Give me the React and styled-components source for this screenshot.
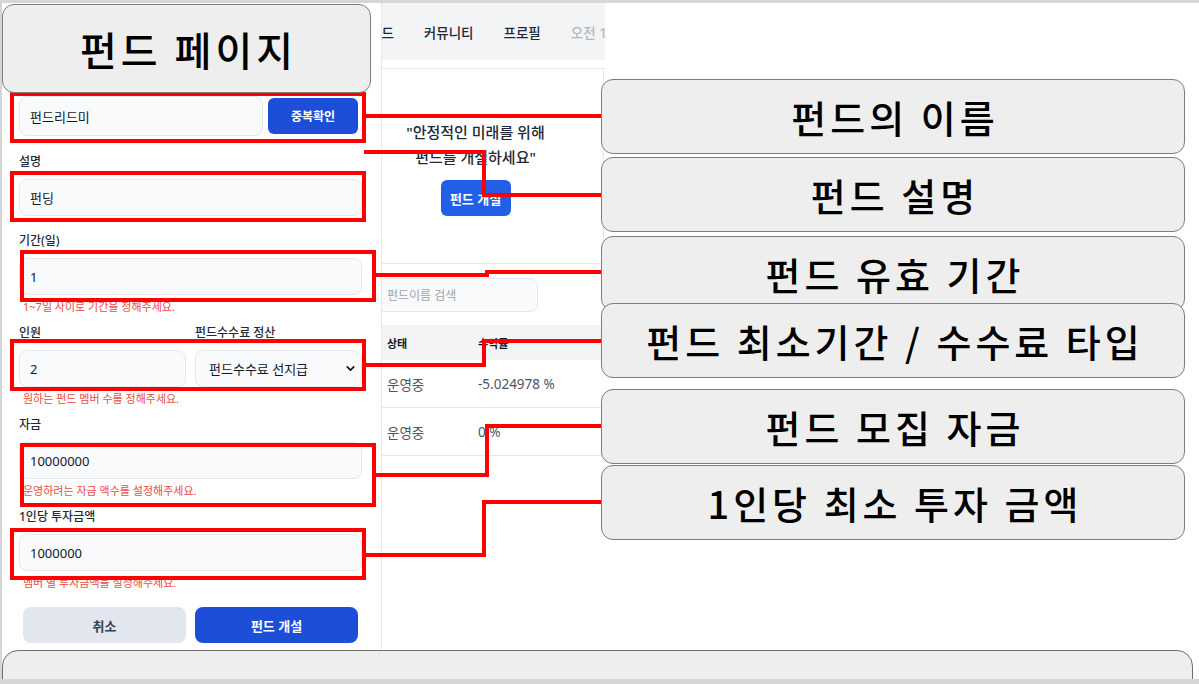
import React from 'react'
import styled, { createGlobalStyle } from 'styled-components'
import { ChevronDown } from 'lucide-react'

const GlobalStyle = createGlobalStyle`
  html, body {
    margin: 0;
    padding: 0;
    background: #d6d6d6;
  }

  body {
    font-family: "Noto Sans", "Noto Sans CJK KR", sans-serif;
  }

  * {
    box-sizing: border-box;
  }
`

const Slide = styled.div`
  align-items: flex-start;
  background: white;
  display: flex;
  height: 676px;
  margin: 3px 0 0 2px;
  overflow: hidden;
  position: relative;
  width: 1197px;
`

const Screenshot = styled.div`
  display: flex;
  flex: none;
  height: 647px;
  width: 603px;
`

// the drawer's header sits under the "펀드 페이지" callout, so it starts at the name row
const FormPanel = styled.div`
  background: white;
  border-right: 1px solid #e5e7eb;
  display: flex;
  flex: none;
  flex-direction: column;
  gap: 11px;
  padding: 93px 19px 0 17px;
  width: 380px;
`

const Field = styled.div`
  display: flex;
  flex-direction: column;
  padding-bottom: ${p => p.$pad || 0}px;
`

const Label = styled.label`
  color: #1f2937;
  font-size: 12px;
  font-weight: 500;
  line-height: 16px;
  margin-bottom: 9px;
  white-space: nowrap;
`

const Input = styled.input`
  background: #f9fafb;
  border: 1px solid #e5e7eb;
  border-radius: 8px;
  color: #111827;
  font-family: inherit;
  font-size: 13px;
  height: ${p => p.$h || 37}px;
  min-width: 0;
  outline: none;
  padding: 0 10px;
  width: 100%;
`

const InlineRow = styled.div`
  align-items: center;
  display: flex;
  gap: 5px;
  padding-right: 4px;
`

const CheckButton = styled.button`
  background: #1d4ed8;
  border: none;
  border-radius: 6px;
  color: white;
  flex: none;
  font-family: inherit;
  font-size: 12px;
  font-weight: 700;
  height: 36px;
  width: 90px;
`

const Hint = styled.div`
  color: #ea4b43;
  font-size: 11px;
  line-height: 14px;
  margin-top: 5px;
  padding-left: 4px;
  white-space: nowrap;
`

const TwoCols = styled.div`
  display: grid;
  gap: 9px;
  grid-template-columns: 1fr 1fr;
`

const Col = styled.div`
  display: flex;
  flex-direction: column;
`

const SelectBox = styled.div`
  align-items: center;
  background: #f9fafb;
  border: 1px solid #e5e7eb;
  border-radius: 8px;
  color: #111827;
  display: flex;
  font-size: 13px;
  height: 37px;
  justify-content: space-between;
  padding: 0 4px 0 13px;
`

const Actions = styled.div`
  display: grid;
  gap: 9px;
  grid-template-columns: 1fr 1fr;
  margin-top: 6px;
  padding: 0 4px;
`

const ActionButton = styled.button`
  background: ${p => p.$primary ? '#1d4ed8' : '#e2e6ee'};
  border: none;
  border-radius: 8px;
  color: ${p => p.$primary ? 'white' : '#374151'};
  font-family: inherit;
  font-size: 13px;
  font-weight: 700;
  height: 36px;
`

const PageView = styled.div`
  background: white;
  display: flex;
  flex: 1;
  flex-direction: column;
  min-width: 0;
  overflow: hidden;
`

const TopNav = styled.nav`
  align-items: center;
  background: #f3f4f6;
  display: flex;
  flex: none;
  gap: 30px;
  height: 57px;
  margin-left: -13px;
  white-space: nowrap;
`

const NavItem = styled.span`
  color: ${p => p.$muted ? '#b4b8bf' : '#1f2937'};
  font-size: 13.5px;
  font-weight: 500;
`

const HeroCard = styled.div`
  align-items: center;
  border: 1px solid #e5e7eb;
  display: flex;
  flex: none;
  flex-direction: column;
  height: 196px;
  margin: 8px 0 0 -35px;
  padding-top: 51px;
  width: 257px;
`

const Quote = styled.p`
  color: #1f2937;
  font-size: 15px;
  font-weight: 500;
  line-height: 25px;
  margin: 0;
  text-align: center;
  white-space: nowrap;
`

const HeroButton = styled.button`
  background: #2160e6;
  border: none;
  border-radius: 6px;
  color: white;
  font-family: inherit;
  font-size: 13px;
  font-weight: 700;
  height: 36px;
  margin-top: 10px;
  width: 70px;
`

const Search = styled.div`
  align-items: center;
  background: #f9fafb;
  border: 1px solid #e5e7eb;
  border-radius: 8px;
  color: #9ca3af;
  display: flex;
  flex: none;
  font-size: 12px;
  height: 34px;
  margin: 14px 0 0 -10px;
  padding-left: 14px;
  width: 166px;
`

const Table = styled.div`
  display: flex;
  flex-direction: column;
  margin-top: 13px;
`

const TableRow = styled.div`
  align-items: center;
  background: ${p => p.$head ? '#f3f4f6' : 'white'};
  border-bottom: ${p => p.$head ? 'none' : '1px solid #e5e7eb'};
  color: ${p => p.$head ? '#111827' : '#4b5563'};
  display: grid;
  font-size: ${p => p.$head ? 11 : 13.5}px;
  font-weight: ${p => p.$head ? 700 : 400};
  grid-template-columns: 91px 1fr;
  height: ${p => p.$head ? 35 : 48}px;
  padding-left: 5px;
  white-space: nowrap;
`

const CalloutColumn = styled.div`
  display: flex;
  flex: none;
  flex-direction: column;
  margin-left: -4px;
  padding-top: 76px;
  width: 584px;
`

const Callout = styled.div`
  align-items: center;
  background: #eeeeee;
  border: 1.5px solid #7d7d7d;
  border-radius: 12px;
  color: #000;
  display: flex;
  font-family: "Noto Sans CJK KR", sans-serif;
  font-size: 38px;
  font-weight: 500;
  height: 75px;
  justify-content: center;
  letter-spacing: 4px;
  margin-top: ${p => p.$offset || 0}px;
  padding-left: 4px;
  position: relative;
  white-space: nowrap;
`

const TitleCallout = styled(Callout)`
  font-size: 40px;
  height: 89px;
  left: 0;
  margin: 0;
  position: absolute;
  top: 1px;
  width: 369px;
`

const FooterBar = styled.div`
  background: #eeeeee;
  border: 1.5px solid #6f6f6f;
  border-radius: 16px 16px 0 0;
  height: 50px;
  left: 0;
  position: absolute;
  top: 647px;
  width: 1191px;
`

const Markup = styled.svg`
  left: 0;
  pointer-events: none;
  position: absolute;
  top: 0;
`

const rects = [
  [12, 94, 352, 47],
  [12, 173, 352, 47],
  [22, 252, 352, 48],
  [12, 341, 352, 48],
  [22, 445, 352, 60],
  [12, 530, 352, 48],
]

const leaders = [
  '364,116 601,116',
  '364,152 484,152 484,195 601,195',
  '374,275 487,275 487,272 601,272',
  '364,365 484,365 484,341 601,341',
  '374,475 487,475 487,426 601,426',
  '364,555 484,555 484,502 601,502',
]

const callouts = [
  { text: '펀드의 이름', offset: 0 },
  { text: '펀드 설명', offset: 3 },
  { text: '펀드 유효 기간', offset: 4 },
  { text: '펀드 최소기간 / 수수료 타입', offset: -8 },
  { text: '펀드 모집 자금', offset: 11 },
  { text: '1인당 최소 투자 금액', offset: 1 },
]

const App = () => (
  <>
    <GlobalStyle />
    <Slide>
      <Screenshot>
        <FormPanel>
          <Field $pad={7}>
            <InlineRow>
              <Input $h={40} readOnly value="펀드리드미" />
              <CheckButton>중복확인</CheckButton>
            </InlineRow>
          </Field>
          <Field $pad={6}>
            <Label>설명</Label>
            <Input readOnly value="펀딩" />
          </Field>
          <Field>
            <Label>기간(일)</Label>
            <Input readOnly value="1" />
            <Hint>1~7일 사이로 기간을 정해주세요.</Hint>
          </Field>
          <Field>
            <TwoCols>
              <Col>
                <Label>인원</Label>
                <Input readOnly value="2" />
              </Col>
              <Col>
                <Label>펀드수수료 정산</Label>
                <SelectBox>
                  펀드수수료 선지급
                  <ChevronDown size={13} strokeWidth={3} color="#111" />
                </SelectBox>
              </Col>
            </TwoCols>
            <Hint>원하는 펀드 멤버 수를 정해주세요.</Hint>
          </Field>
          <Field>
            <Label>자금</Label>
            <Input readOnly value="10000000" />
            <Hint>운영하려는 자금 액수를 설정해주세요.</Hint>
          </Field>
          <Field>
            <Label>1인당 투자금액</Label>
            <Input readOnly value="1000000" />
            <Hint>멤버 별 투자금액을 설정해주세요.</Hint>
          </Field>
          <Actions>
            <ActionButton>취소</ActionButton>
            <ActionButton $primary>펀드 개설</ActionButton>
          </Actions>
        </FormPanel>

        <PageView>
          <TopNav>
            <NavItem>펀드</NavItem>
            <NavItem>커뮤니티</NavItem>
            <NavItem>프로필</NavItem>
            <NavItem $muted>오전 10:24</NavItem>
          </TopNav>
          <HeroCard>
            <Quote>"안정적인 미래를 위해<br />펀드를 개설하세요"</Quote>
            <HeroButton>펀드 개설</HeroButton>
          </HeroCard>
          <Search>펀드이름 검색</Search>
          <Table>
            <TableRow $head><span>상태</span><span>수익률</span></TableRow>
            <TableRow><span>운영중</span><span>-5.024978 %</span></TableRow>
            <TableRow><span>운영중</span><span>0 %</span></TableRow>
          </Table>
        </PageView>
      </Screenshot>

      <Markup width="1197" height="676" viewBox="2 3 1197 676">
        {rects.map(([x, y, w, h], i) => (
          <rect key={i} x={x} y={y} width={w} height={h} fill="none" stroke="#ff0000" strokeWidth="4" />
        ))}
        {leaders.map((pts, i) => (
          <polyline key={i} points={pts} fill="none" stroke="#ff0000" strokeWidth="4" />
        ))}
      </Markup>

      <CalloutColumn>
        {callouts.map(c => (
          <Callout key={c.text} $offset={c.offset}>{c.text}</Callout>
        ))}
      </CalloutColumn>

      <TitleCallout>펀드 페이지</TitleCallout>
      <FooterBar />
    </Slide>
  </>
)

export default App
